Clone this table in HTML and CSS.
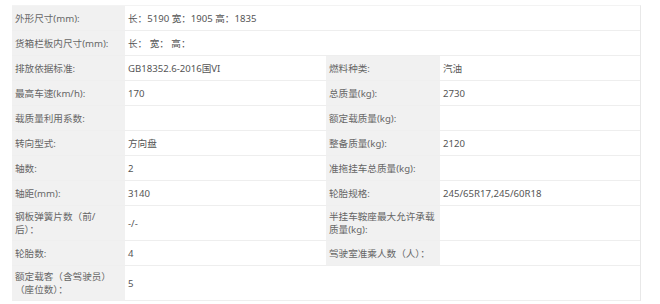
FILE: index.html
```html
<!DOCTYPE html>
<html lang="zh-CN">
<head>
<meta charset="utf-8">
<title>参数</title>
<link rel="stylesheet" href="styles.css">
</head>
<body>
<div class="spec">
  <div class="k left">外形尺寸(mm):</div><div class="v span3">长：5190 宽：1905 高：1835</div>
  <div class="k left">货箱栏板内尺寸(mm):</div><div class="v span3">长： 宽： 高：</div>
  <div class="k left">排放依据标准:</div><div class="v">GB18352.6-2016国VI</div>
  <div class="k">燃料种类:</div><div class="v">汽油</div>
  <div class="k left">最高车速(km/h):</div><div class="v">170</div>
  <div class="k">总质量(kg):</div><div class="v">2730</div>
  <div class="k left">载质量利用系数:</div><div class="v"></div>
  <div class="k">额定载质量(kg):</div><div class="v"></div>
  <div class="k left">转向型式:</div><div class="v">方向盘</div>
  <div class="k">整备质量(kg):</div><div class="v">2120</div>
  <div class="k left">轴数:</div><div class="v">2</div>
  <div class="k">准拖挂车总质量(kg):</div><div class="v"></div>
  <div class="k left">轴距(mm):</div><div class="v">3140</div>
  <div class="k">轮胎规格:</div><div class="v">245/65R17,245/60R18</div>
  <div class="k left">钢板弹簧片数（前/后）：</div><div class="v">-/-</div>
  <div class="k">半挂车鞍座最大允许承载质量(kg):</div><div class="v"></div>
  <div class="k left">轮胎数:</div><div class="v">4</div>
  <div class="k">驾驶室准乘人数（人）：</div><div class="v"></div>
  <div class="k left">额定载客（含驾驶员）（座位数）：</div><div class="v span3">5</div>
</div>
</body>
</html>
```
FILE: styles.css
```css
* {
  box-sizing: border-box;
}

body {
  margin: 0;
  background: #fff;
  font-family: "Noto Sans", "Noto Sans CJK SC", sans-serif;
  font-size: 9.6px;
  line-height: 13px;
}

.spec {
  margin: 5px 0 0 12px;
  width: 629px;
  display: grid;
  grid-template-columns: 113px 201px 114px 200px;
  border-top: 1px solid #f3f3f3;
  border-right: 1px solid #e8e8e8;
}

.k,
.v {
  display: flex;
  align-items: center;
  min-height: 25px;
  padding: 4px 3px;
  border-bottom: 1px solid #eeeeee;
}

.k {
  background: #f1f1f1;
  color: #666;
  border-bottom-color: #efefef;
}

.k.left {
  padding-right: 12px;
}

.v {
  background: #fff;
  color: #555;
}

.span3 {
  grid-column: span 3;
}
```
